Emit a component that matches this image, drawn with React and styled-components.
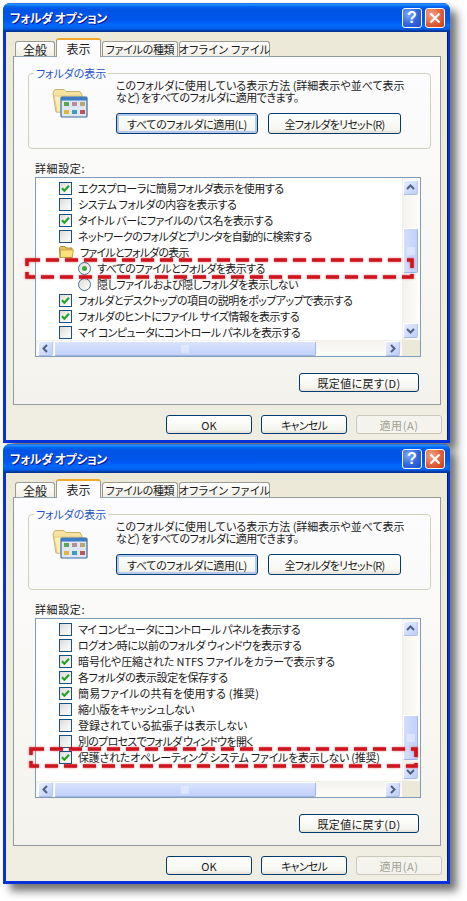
import React from 'react';
import styled, { createGlobalStyle } from 'styled-components';

const GlobalStyle = createGlobalStyle`
	html, body {
		margin: 0;
		padding: 0;
		background: #ffffff;
	}
	body {
		font-family: "Noto Sans CJK JP", "Liberation Sans", sans-serif;
		font-size: 11px;
		font-feature-settings: "palt";
		color: #1a1a1a;
	}
`;

const Page = styled.div`
	width: 467px;
	height: 901px;
	padding: 3px 0 0 3px;
	box-sizing: border-box;
	display: flex;
	flex-direction: column;
	gap: 1px;
	overflow: hidden;
`;

const Window = styled.div`
	position: relative;
	width: 447px;
	height: 440px;
	box-sizing: border-box;
	flex: none;
	display: flex;
	flex-direction: column;
	border-radius: 7px 7px 0 0;
	background: #0831d9;
	box-shadow: 7px 7px 8px rgba(40, 40, 40, 0.65);
`;

const TitleBar = styled.div`
	height: 29px;
	flex: none;
	display: flex;
	align-items: center;
	padding: 0 5px 0 7px;
	border-radius: 7px 7px 0 0;
	background: linear-gradient(180deg, #0058ee 0%, #3593ff 4%, #288eff 6%, #127dff 8%, #036ffc 10%, #0262ee 14%, #0057e5 20%, #0054e3 24%, #0055eb 56%, #005bf5 66%, #026afe 76%, #0062ef 86%, #0052d6 92%, #0040ab 94%, #003092 100%);
`;

const TitleText = styled.span`
	flex: 1;
	color: #ffffff;
	font-size: 12px;
	font-weight: 700;
	letter-spacing: -0.4px;
	text-shadow: 1px 1px 0 #0f1089;
`;

const CaptionButton = styled.div`
	width: 20px;
	height: 20px;
	box-sizing: border-box;
	margin-left: 3px;
	display: flex;
	align-items: center;
	justify-content: center;
	border: 1px solid #ffffff;
	border-radius: 3px;
	color: #ffffff;
	font-family: "Liberation Sans", sans-serif;
	font-size: 16px;
	font-weight: 700;
	background: ${p => p.$close
		? 'radial-gradient(circle at 30% 30%, #f0a58a, #e0603a 55%, #c23a1c)'
		: 'radial-gradient(circle at 30% 30%, #7fa8f5, #2f66e0 55%, #1d4cc4)'};
`;

const Client = styled.div`
	flex: 1;
	min-height: 0;
	margin: 0 2px 3px 3px;
	padding: 6px 5px 0 7px;
	display: flex;
	flex-direction: column;
	background: linear-gradient(180deg, #ece9d8, #f0eee2);
	border-right: 1px solid #00196e;
`;

const TabRow = styled.div`
	height: 19px;
	flex: none;
	display: flex;
	align-items: flex-end;
	padding-left: 2px;
	position: relative;
	z-index: 1;
	margin-bottom: -1px;
`;

const Tab = styled.div`
	height: ${p => (p.$active ? 19 : 16)}px;
	width: ${p => p.$w}px;
	box-sizing: border-box;
	margin-right: 1px;
	display: flex;
	align-items: center;
	justify-content: center;
	white-space: nowrap;
	font-size: ${p => (p.$small ? 11 : 12)}px;
	letter-spacing: ${p => p.$track || 0}px;
	border: 1px solid #9c9b91;
	border-bottom: ${p => (p.$active ? 'none' : '1px solid #91a7b4')};
	border-radius: 3px 3px 0 0;
	background: ${p => (p.$active ? '#fcfcfe' : 'linear-gradient(180deg, #ffffff, #f0eee4)')};
	border-top: ${p => (p.$active ? '2px solid #f0a92c' : '1px solid #9c9b91')};
`;

const Panel = styled.div`
	height: 349px;
	flex: none;
	box-sizing: border-box;
	padding: 16px 20px 0 14px;
	margin-right: 1px;
	border: 1px solid #919b9c;
	background: linear-gradient(180deg, #fcfcfe 0%, #f8f7f3 60%, #f3f2ec 100%);
`;

const Group = styled.fieldset`
	height: 83px;
	width: 403px;
	box-sizing: border-box;
	margin: -7px 0 0;
	padding: 0 0 0 23px;
	display: flex;
	border: 1px solid #d0d0bf;
	border-radius: 4px;
`;

const Legend = styled.legend`
	margin-left: -18px;
	padding: 0 2px;
	color: #1f55c8;
	line-height: 14px;
	letter-spacing: -0.1px;
`;

const GroupIcon = styled.svg`
	flex: none;
	width: 36px;
	height: 30px;
	margin-top: 8px;
`;

const GroupBody = styled.div`
	margin: -1px 0 0 28px;
	display: flex;
	flex-direction: column;
`;

const Note = styled.div`
	line-height: 12px;
	letter-spacing: ${p => p.$track || 0}px;
	white-space: nowrap;
`;

const GroupButtons = styled.div`
	margin-top: 10px;
	display: flex;
	gap: 10px;
`;

const Button = styled.div`
	width: ${p => p.$w}px;
	height: ${p => p.$h || 19}px;
	box-sizing: border-box;
	flex: none;
	display: flex;
	align-items: center;
	justify-content: center;
	border: 1px solid ${p => (p.$disabled ? '#cac8bb' : '#003c74')};
	border-radius: 3px;
	color: ${p => (p.$disabled ? '#a1a192' : '#1a1a1a')};
	background: ${p => (p.$disabled ? '#f4f3ee' : 'linear-gradient(180deg, #ffffff 0%, #f6f6f0 80%, #e3e1d6 100%)')};
	box-shadow: ${p => (p.$default ? 'inset 0 0 0 2px #b4c9ec' : 'none')};
	white-space: nowrap;
	letter-spacing: ${p => p.$track || 0}px;
`;

const SettingsLabel = styled.div`
	margin: 12px 0 0 7px;
	line-height: 14px;
	letter-spacing: 0.6px;
`;

const ListBox = styled.div`
	width: 386px;
	height: 180px;
	box-sizing: border-box;
	margin: 2px 0 0 7px;
	display: grid;
	grid-template-columns: 1fr 18px;
	grid-template-rows: 1fr 16px;
	border: 1px solid #7f9db9;
	background: #ffffff;
`;

const Rows = styled.div`
	padding: 2px 0 0 23px;
	min-width: 0;
	overflow: hidden;
`;

const Row = styled.div`
	height: 16px;
	display: flex;
	align-items: center;
	padding-left: ${p => (p.$indent ? 19 : 0)}px;
	white-space: nowrap;
	letter-spacing: ${p => p.$track || 0}px;
`;

const RowLabel = styled.span`
	margin-left: 6px;
`;

const CheckBox = styled.div`
	width: 13px;
	height: 13px;
	box-sizing: border-box;
	flex: none;
	display: flex;
	border: 1px solid #1c5180;
	background: linear-gradient(135deg, #dcdcd7, #ffffff);
`;

const Radio = styled.div`
	width: 13px;
	height: 13px;
	box-sizing: border-box;
	flex: none;
	display: flex;
	align-items: center;
	justify-content: center;
	border: 1px solid #3f6f96;
	border-radius: 50%;
	background: linear-gradient(135deg, #dcdcd7, #ffffff);
`;

const RadioDot = styled.div`
	width: 5px;
	height: 5px;
	border-radius: 50%;
	background: #3fa83f;
`;

const ScrollV = styled.div`
	grid-row: 1;
	grid-column: 2;
	padding: 2px 2px 2px 1px;
	display: flex;
	flex-direction: column;
	background: linear-gradient(90deg, #f3f1ec, #fefefb);
`;

const ScrollH = styled.div`
	grid-row: 2;
	grid-column: 1;
	padding: 1px 2px 0 2px;
	display: flex;
	align-items: flex-start;
	background: linear-gradient(180deg, #f3f1ec, #fefefb);
`;

const ScrollCorner = styled.div`
	grid-row: 2;
	grid-column: 2;
	background: #ece9d8;
`;

const ScrollButton = styled.div`
	width: 15px;
	height: 15px;
	flex: none;
	box-sizing: border-box;
	display: flex;
	align-items: center;
	justify-content: center;
	border: 1px solid #ffffff;
	border-right-color: #b8c8ea;
	border-bottom-color: #a9bce6;
	border-radius: 2px;
	background: linear-gradient(135deg, #e6eefe, #bccdf8);
`;

const ThumbV = styled.div`
	width: 15px;
	height: ${p => p.$h}px;
	margin-top: ${p => p.$top}px;
	flex: none;
	box-sizing: border-box;
	display: flex;
	align-items: center;
	justify-content: center;
	border: 1px solid #ffffff;
	border-right-color: #9fb3e4;
	border-bottom-color: #9fb3e4;
	border-radius: 2px;
	background: linear-gradient(90deg, #d3defc, #c2d1fa);
`;

const ThumbH = styled.div`
	width: ${p => p.$w}px;
	height: 15px;
	margin-left: 1px;
	flex: none;
	box-sizing: border-box;
	display: flex;
	align-items: center;
	justify-content: center;
	border: 1px solid #ffffff;
	border-right-color: #9fb3e4;
	border-bottom-color: #9fb3e4;
	border-radius: 2px;
	background: linear-gradient(180deg, #d9e3fd, #c2d1fa);
`;

const Spacer = styled.div`
	flex: 1;
`;

const RestoreRow = styled.div`
	margin-top: 16px;
	padding-right: 1px;
	display: flex;
	justify-content: flex-end;
`;

const Footer = styled.div`
	margin-top: 10px;
	display: flex;
	justify-content: flex-end;
	gap: 9px;
`;

const Highlight = styled.svg`
	position: absolute;
	left: 0;
	top: 0;
	width: 447px;
	height: 440px;
	pointer-events: none;
	filter: drop-shadow(0 0 1px rgba(200, 20, 30, 0.6));
`;

const Mark = () => (
	<svg width="11" height="11" viewBox="0 0 11 11">
		<path d="M2 5.2 L4.4 7.8 L9 2.8" fill="none" stroke="#21a121" strokeWidth="2" />
	</svg>
);

const Arrow = ({ dir }) => {
	const d = {
		up: 'M3 8 L6.5 4.5 L10 8',
		down: 'M3 5 L6.5 8.5 L10 5',
		left: 'M8 3 L4.5 6.5 L8 10',
		right: 'M5 3 L8.5 6.5 L5 10',
	}[dir];
	return (
		<svg width="13" height="13" viewBox="0 0 13 13">
			<path d={d} fill="none" stroke="#4d6185" strokeWidth="2" />
		</svg>
	);
};

const Grip = ({ vertical }) => (
	<svg width="8" height="8" viewBox="0 0 8 8">
		<path
			d={vertical ? 'M0 1h8M0 3h8M0 5h8M0 7h8' : 'M1 0v8M3 0v8M5 0v8M7 0v8'}
			stroke="#eef3fe"
			strokeWidth="1"
		/>
	</svg>
);

const FolderSmall = () => (
	<svg width="15" height="14" viewBox="0 0 15 14">
		<path d="M0.5 3 L1.5 1.5 H6 L7 3 H13 V12.5 H1 Z" fill="#e8c45c" stroke="#a98a3a" />
		<path d="M1.5 5 H14.5 L13 12.5 H1.5 Z" fill="#fbe27a" stroke="#b8953c" strokeWidth="0.7" />
	</svg>
);

const FolderBig = () => (
	<GroupIcon viewBox="0 0 36 30">
		<path d="M1 5 L3 1.5 H12 L14 3.5 H28 L30 7 V24 H4 Z" fill="#f6e3a0" stroke="#c9b26a" />
		<path d="M2 8 H29 V24 H5 Z" fill="#fbeeb8" stroke="#d8c27c" strokeWidth="0.8" />
		<rect x="9" y="9" width="26" height="20" rx="1" fill="#dfe7f2" stroke="#3d6a9e" strokeWidth="1.2" />
		<rect x="9" y="9" width="26" height="3.5" fill="#3d7cc4" />
		<rect x="12" y="14" width="5" height="4" fill="#5aa653" />
		<rect x="20" y="14" width="5" height="4" fill="#b78aa0" />
		<rect x="28" y="14" width="5" height="4" fill="#b5a77a" />
		<rect x="12" y="22" width="5" height="4" fill="#e2b63a" />
		<rect x="20" y="22" width="5" height="4" fill="#3f9cc0" />
		<rect x="28" y="22" width="5" height="4" fill="#b8565c" />
	</GroupIcon>
);

const SettingRow = ({ kind, text, track }) => {
	if (kind === 'folder') {
		return (
			<Row $track={track}>
				<FolderSmall />
				<RowLabel>{text}</RowLabel>
			</Row>
		);
	}
	if (kind === 'radio' || kind === 'radioOn') {
		return (
			<Row $indent $track={track}>
				<Radio>{kind === 'radioOn' && <RadioDot />}</Radio>
				<RowLabel>{text}</RowLabel>
			</Row>
		);
	}
	return (
		<Row $track={track}>
			<CheckBox>{kind === 'on' && <Mark />}</CheckBox>
			<RowLabel>{text}</RowLabel>
		</Row>
	);
};

const firstRows = [
	{ kind: 'on', track: -0.49, text: 'エクスプローラに簡易フォルダ表示を使用する' },
	{ kind: 'off', track: -0.39, text: 'システム フォルダの内容を表示する' },
	{ kind: 'on', track: -0.45, text: 'タイトル バーにファイルのパス名を表示する' },
	{ kind: 'off', track: -0.68, text: 'ネットワークのフォルダとプリンタを自動的に検索する' },
	{ kind: 'folder', track: -0.83, text: 'ファイルとフォルダの表示' },
	{ kind: 'radioOn', track: -0.6, text: 'すべてのファイルとフォルダを表示する' },
	{ kind: 'radio', track: -0.43, text: '隠しファイルおよび隠しフォルダを表示しない' },
	{ kind: 'on', track: -0.57, text: 'フォルダとデスクトップの項目の説明をポップアップで表示する' },
	{ kind: 'on', track: -0.45, text: 'フォルダのヒントにファイル サイズ情報を表示する' },
	{ kind: 'off', track: -0.68, text: 'マイ コンピュータにコントロール パネルを表示する' },
];

const secondRows = [
	{ kind: 'off', track: -0.68, text: 'マイ コンピュータにコントロール パネルを表示する' },
	{ kind: 'off', track: -0.45, text: 'ログオン時に以前のフォルダ ウィンドウを表示する' },
	{ kind: 'on', track: -0.05, text: '暗号化や圧縮された NTFS ファイルをカラーで表示する' },
	{ kind: 'on', track: -0.4, text: '各フォルダの表示設定を保存する' },
	{ kind: 'on', track: 0.25, text: '簡易ファイルの共有を使用する (推奨)' },
	{ kind: 'off', track: -0.4, text: '縮小版をキャッシュしない' },
	{ kind: 'off', track: 0, text: '登録されている拡張子は表示しない' },
	{ kind: 'off', track: -0.7, text: '別のプロセスでフォルダ ウィンドウを開く' },
	{ kind: 'on', track: -0.25, text: '保護されたオペレーティング システム ファイルを表示しない (推奨)' },
];

const Dialog = ({ rows, thumbTop, mark }) => (
	<Window>
		<TitleBar>
			<TitleText>フォルダ オプション</TitleText>
			<CaptionButton>?</CaptionButton>
			<CaptionButton $close>
				<svg width="14" height="14" viewBox="0 0 14 14">
					<path d="M2.5 2.5 L11.5 11.5 M11.5 2.5 L2.5 11.5" stroke="#ffffff" strokeWidth="2.2" />
				</svg>
			</CaptionButton>
		</TitleBar>
		<Client>
			<TabRow>
				<Tab $w={40}>全般</Tab>
				<Tab $w={45} $active>表示</Tab>
				<Tab $w={76} $small $track={-0.3}>ファイルの種類</Tab>
				<Tab $w={91} $small $track={0.3}>オフライン ファイル</Tab>
			</TabRow>
			<Panel>
				<Group>
					<Legend>フォルダの表示</Legend>
					<FolderBig />
					<GroupBody>
						<Note>このフォルダに使用している表示方法 (詳細表示や並べて表示</Note>
						<Note $track={-0.5}>など) をすべてのフォルダに適用できます。</Note>
						<GroupButtons>
							<Button $w={142} $h={21} $default $track={-0.35}>すべてのフォルダに適用(L)</Button>
							<Button $w={133} $h={21} $track={-0.8}>全フォルダをリセット(R)</Button>
						</GroupButtons>
					</GroupBody>
				</Group>
				<SettingsLabel>詳細設定:</SettingsLabel>
				<ListBox>
					<Rows>
						{rows.map(r => <SettingRow key={r.text} {...r} />)}
					</Rows>
					<ScrollV>
						<ScrollButton><Arrow dir="up" /></ScrollButton>
						<ThumbV $top={thumbTop} $h={45}><Grip vertical /></ThumbV>
						<Spacer />
						<ScrollButton><Arrow dir="down" /></ScrollButton>
					</ScrollV>
					<ScrollH>
						<ScrollButton><Arrow dir="left" /></ScrollButton>
						<ThumbH $w={262}><Grip /></ThumbH>
						<Spacer />
						<ScrollButton><Arrow dir="right" /></ScrollButton>
					</ScrollH>
					<ScrollCorner />
				</ListBox>
				<RestoreRow>
					<Button $w={120} $track={0.4}>既定値に戻す(D)</Button>
				</RestoreRow>
			</Panel>
			<Footer>
				<Button $w={86}>OK</Button>
				<Button $w={86} $track={-0.8}>キャンセル</Button>
				<Button $w={86} $disabled $track={0.6}>適用(A)</Button>
			</Footer>
		</Client>
		<Highlight viewBox="0 0 447 440">
			<rect
				x={mark.x}
				y={mark.y}
				width="385"
				height="17"
				fill="none"
				stroke="#d0141e"
				strokeWidth="3.5"
				strokeDasharray="13 6"
			/>
		</Highlight>
	</Window>
);

export default function App() {
	return (
		<>
			<GlobalStyle />
			<Page>
				<Dialog rows={firstRows} thumbTop={33} mark={{ x: 24, y: 257 }} />
				<Dialog rows={secondRows} thumbTop={79} mark={{ x: 28, y: 305 }} />
			</Page>
		</>
	);
}
